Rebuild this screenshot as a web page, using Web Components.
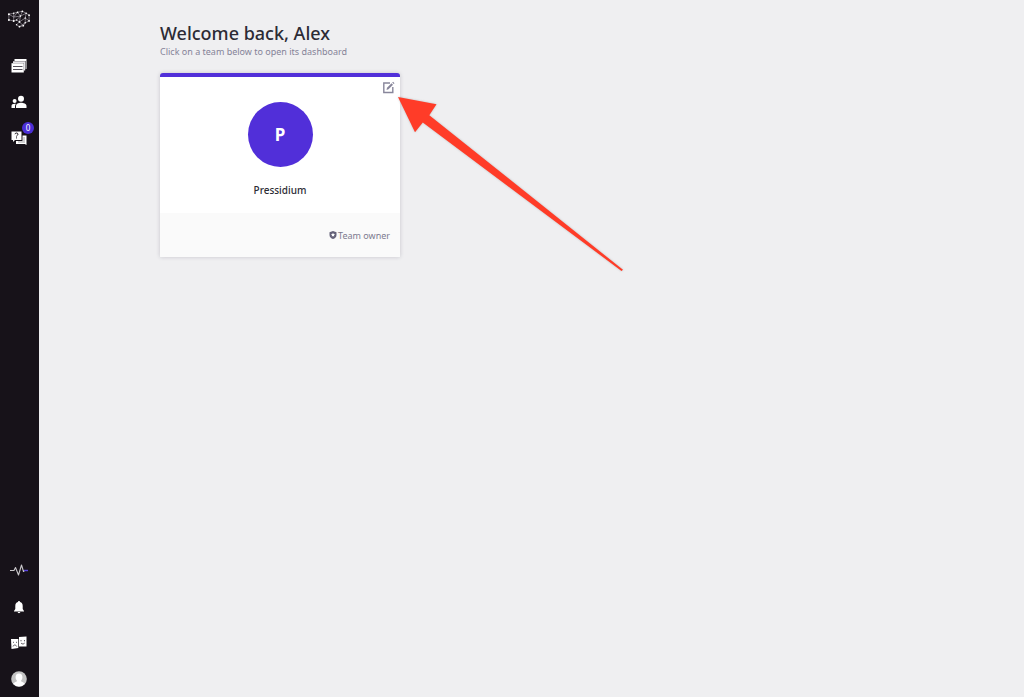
<!DOCTYPE html>
<html lang="en">
<head>
<meta charset="utf-8">
<meta name="viewport" content="width=device-width, initial-scale=1">
<title>Dashboard</title>
<style>
html, body { margin: 0; }
body { font-family: "Noto Sans", "Open Sans", sans-serif; background: #efeff1; color: #2c2b35; }
</style>
</head>
<body>
<app-shell>
  <side-bar slot="side"></side-bar>
  <page-heading>
    Welcome back, Alex
    <span slot="hint">Click on a team below to open its dashboard</span>
  </page-heading>
  <team-card initial="P" role-name="Team owner">
    Pressidium
    <pointer-arrow slot="callout"></pointer-arrow>
  </team-card>
</app-shell>

<template id="t-shell">
<style>
:host { display: grid; grid-template-columns: 39px 1fr; min-height: 100vh; }
main { padding: 22px 121px; }
</style>
<slot name="side"></slot>
<main><slot></slot></main>
</template>

<template id="t-side">
<style>
:host { display: flex; flex-direction: column; justify-content: space-between; position: sticky; top: 0; height: 100vh; box-sizing: border-box; background: #171219; color: #fff; }
nav { display: flex; flex-direction: column; }
.logo { margin-bottom: 10px; height: 38px; }
</style>
<nav aria-label="Main">
  <nav-item class="logo" label="Home">
    <svg width="25" height="20" viewBox="0 0 26 20" fill="none">
      <path d="M3 5L8 4L12 3L17 2L21 4L24 6V12L20 14L18 17L14 18L11 16L14 13L11 11L8 12L3 11ZM3 5L8 8L12 3L15 7L17 2M8 4V12M8 8L15 7L21 4L20 9L24 12M15 7L14 13L20 9V14L14 18M11 11L15 7M14 13L18 17" stroke="#a5a0a8" stroke-width=".7"/>
      <g fill="#fff"><circle cx="3" cy="5" r="1"/><circle cx="3" cy="11" r="1"/><circle cx="8" cy="4" r=".8"/><circle cx="8" cy="12" r="1"/><circle cx="12" cy="3" r=".9"/><circle cx="17" cy="2" r=".9"/><circle cx="21" cy="4" r=".8"/><circle cx="24" cy="6" r=".9"/><circle cx="24" cy="12" r=".9"/><circle cx="20" cy="14" r=".8"/><circle cx="18" cy="17" r=".9"/><circle cx="14" cy="18" r=".9"/><circle cx="11" cy="16" r=".8"/><circle cx="14" cy="13" r=".9"/><circle cx="11" cy="11" r=".8"/><circle cx="15" cy="7" r=".8"/><circle cx="20" cy="9" r=".7"/></g>
    </svg>
  </nav-item>
  <nav-item label="Sites">
    <svg width="16" height="16" viewBox="0 0 16 16">
      <path d="M3.500 1H15.500V11H14.600V3H3.500Z" fill="#fff"/>
      <path d="M2 3.200H14.200V12.500H13V5H2Z" fill="#e6e4e8"/>
      <path d="M.5 5.200H12.800V14.500H.5Z" fill="#fff"/>
      <path d="M2 8.500H11.500M2 11.500H11.500" stroke="#55505a"/>
    </svg>
  </nav-item>
  <nav-item label="People">
    <svg width="16" height="16" viewBox="0 0 16 16" fill="#fff">
      <circle cx="10" cy="4.800" r="3"/><path d="M5 14V12C5 9.500 7.500 8.700 10 8.700S15.500 9.500 15.500 12V14Z"/>
      <circle cx="3.600" cy="7" r="2"/><path d="M.5 14V12C.5 10.200 2 9.600 4.900 9.800C4 11 4 12 4 14Z"/>
    </svg>
  </nav-item>
  <nav-item label="Support" badge="0">
    <svg width="16" height="16" viewBox="0 0 16 16">
      <path d="M11.500 5.500H15.500V15L13.800 14H5V11H11.500Z" fill="#fff"/>
      <path d="M.5 1.500H10.500V10H4L2 12V10H.5Z" fill="#fff"/>
      <path d="M4 4.200C4 2.600 7 2.600 7 4.200C7 5.300 5.500 5.200 5.500 6.500M5.500 7.400V8.400" fill="none" stroke="#171219" stroke-width="1"/>
      <path d="M12 8H14M12 10H14M7 12H14" stroke="#77727a" stroke-width=".7"/>
    </svg>
  </nav-item>
</nav>
<nav aria-label="Account">
  <nav-item label="Activity">
    <svg width="20" height="18" viewBox="0 0 20 18" fill="none" stroke-width="1.100" stroke-linejoin="round">
      <path d="M1 8.500H5L6.500 5.500L9.500 13L12.500 3L14.500 9.500L15.500 8.500" stroke="#c8c6c9"/><path d="M15 8.500H19" stroke="#5b45e0" stroke-width="1.400"/>
    </svg>
  </nav-item>
  <nav-item label="Notifications">
    <svg width="16" height="16" viewBox="0 0 16 16" fill="#fff"><path d="M8 2C8.700 2 9 2.500 9 3C11 3.500 11.700 5 11.700 7V10L13 12V12.500H3V12L4.300 10V7C4.300 5 5 3.500 7 3C7 2.500 7.300 2 8 2ZM6.700 13H9.300C9.300 14.500 6.700 14.500 6.700 13Z"/></svg>
  </nav-item>
  <nav-item label="Feedback">
    <svg width="18" height="16" viewBox="0 0 18 16">
      <path d="M9 2L16.500 1.500V11.500H9Z" fill="#fff"/><path d="M1 4H8.300V13L1.500 14Z" fill="#fff"/>
      <path d="M11 5V6.300M14.500 5V6.300M11 8C12 9.300 13.800 9.300 14.700 8M3 7L4 7.600M7 7L6 7.600M3 11.500C3.500 9.500 6 9.500 6.700 11.500" fill="none" stroke="#39343c" stroke-width=".8"/>
    </svg>
  </nav-item>
  <nav-item label="Profile">
    <svg width="16" height="16" viewBox="0 0 16 16">
      <circle cx="8" cy="8" r="7.800" fill="#c4c4c4"/><path d="M8 2.500C10.500 2.500 11.500 4.200 11.400 6.500C11.300 8.300 10.500 9 10 9.700C10 11 13 11 13.800 12.800A7.500 7.500 0 0 1 2.200 12.800C3 11 6 11 6 9.700C5.500 9 4.700 8.300 4.600 6.500C4.500 4.200 5.500 2.500 8 2.500Z" fill="#fff"/>
    </svg>
  </nav-item>
</nav>
</template>

<template id="t-item">
<style>
:host { display: block; height: 36px; }
a { position: relative; display: flex; align-items: center; justify-content: center; height: 100%; padding-right: 2px; color: inherit; text-decoration: none; }
.badge { position: absolute; top: 2px; right: 5px; width: 12px; height: 12px; border-radius: 50%; background: #4b2fd6; font-size: 8px; line-height: 12px; text-align: center; }
</style>
<a href="#"><slot></slot></a>
</template>

<template id="t-heading">
<style>
:host { display: block; }
h1 { margin: 0; font-size: 18px; line-height: 22px; font-weight: 500; }
p { margin: 0; font-size: 9px; line-height: 16px; color: #858398; }
</style>
<h1><slot></slot></h1>
<p><slot name="hint"></slot></p>
</template>

<template id="t-card">
<style>
:host { display: block; position: relative; width: 240px; margin-top: 13px; }
article { background: #fff; border-top: 4px solid #512fd9; border-radius: 3px 3px 1px 1px; box-shadow: 0 0 4px rgba(40, 36, 60, .2); }
.body { display: flex; flex-direction: column; align-items: center; padding: 4px 5px 15px; }
button { align-self: flex-end; display: flex; padding: 0; border: 0; background: none; color: #88869b; }
.open { display: flex; flex-direction: column; align-items: center; gap: 15px; margin-top: 8px; color: inherit; text-decoration: none; font-size: 10px; line-height: 16px; font-weight: 500; }
.avatar { width: 65px; height: 65px; border-radius: 50%; background: #512fd9; color: #fff; font-size: 17px; line-height: 65px; font-weight: 700; text-align: center; }
footer { display: flex; align-items: center; justify-content: flex-end; gap: 1px; height: 44px; padding: 0 10px; background: #fafafa; color: #7d7b8f; font-size: 9px; border-radius: 0 0 1px 1px; }
</style>
<article>
  <div class="body">
    <button type="button" aria-label="Edit team">
      <svg width="13" height="13" viewBox="0 0 13 13" fill="none" stroke="currentColor">
        <path d="M8 2H1.800V11.500H10.800V6" stroke-width="1.400"/><path d="M4.500 9L5 6.800L9.500 2.300L11 3.800L6.500 8.300Z" fill="currentColor" stroke="none"/><path d="M10.200 1.600L11.700 3.100L12.500 2.200L11.100 .8Z" fill="currentColor" stroke="none"/>
      </svg>
    </button>
    <a class="open" href="#"><span class="avatar"></span><span><slot></slot></span></a>
  </div>
  <footer>
    <svg width="8" height="8" viewBox="0 0 8 8"><path d="M4 0L7.500 1.200V4C7.500 6 6 7.400 4 8C2 7.400 .5 6 .5 4V1.200Z" fill="#656279"/><path d="M4 1.700L4.600 3L6 3.200L5 4.200L5.200 5.600L4 5L2.800 5.600L3 4.200L2 3.200L3.400 3Z" fill="#fff"/></svg>
    <span class="role"></span>
  </footer>
</article>
<slot name="callout"></slot>
</template>

<template id="t-arrow">
<style>
:host { display: block; position: absolute; left: 238px; top: 24px; pointer-events: none; }
svg { display: block; filter: drop-shadow(0 0 1px rgba(80, 80, 80, .3)); }
</style>
<svg width="226" height="175" viewBox="0 0 226 175" aria-hidden="true"><path d="M0 0L38.500 7.200L31.300 18.200L225 172.800L223.500 174L24.800 25.500L17 35.300Z" fill="#ff3c28"/></svg>
</template>

<script>
class BaseElement extends HTMLElement {
  constructor() {
    super();
    const source = document.getElementById(this.constructor.template);
    this.attachShadow({ mode: "open" }).append(source.content.cloneNode(true));
  }
}
class AppShell extends BaseElement { static template = "t-shell"; }
class SideBar extends BaseElement { static template = "t-side"; }
class PageHeading extends BaseElement { static template = "t-heading"; }
class PointerArrow extends BaseElement { static template = "t-arrow"; }
class NavItem extends BaseElement {
  static template = "t-item";
  connectedCallback() {
    const link = this.shadowRoot.querySelector("a");
    link.setAttribute("aria-label", this.getAttribute("label"));
    if (this.hasAttribute("badge") && !link.querySelector(".badge")) {
      const badge = document.createElement("span");
      badge.className = "badge";
      badge.textContent = this.getAttribute("badge");
      link.append(badge);
    }
  }
}
class TeamCard extends BaseElement {
  static template = "t-card";
  connectedCallback() {
    this.shadowRoot.querySelector(".avatar").textContent = this.getAttribute("initial");
    this.shadowRoot.querySelector(".role").textContent = this.getAttribute("role-name");
  }
}
customElements.define("app-shell", AppShell);
customElements.define("nav-item", NavItem);
customElements.define("side-bar", SideBar);
customElements.define("page-heading", PageHeading);
customElements.define("pointer-arrow", PointerArrow);
customElements.define("team-card", TeamCard);
</script>
</body>
</html>
